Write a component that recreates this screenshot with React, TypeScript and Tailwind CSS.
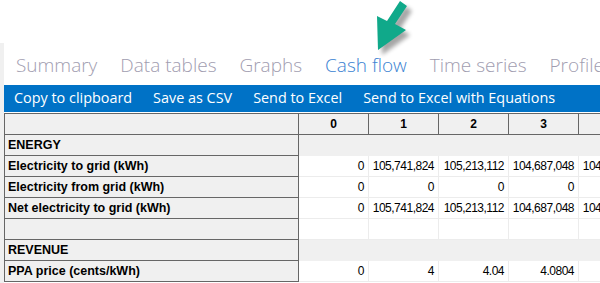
import React from "react";

const tabs = ["Summary", "Data tables", "Graphs", "Cash flow", "Time series", "Profile"];
const actions = ["Copy to clipboard", "Save as CSV", "Send to Excel", "Send to Excel with Equations"];

type Row = { label: string; section?: boolean; blank?: boolean; values?: string[] };

const rows: Row[] = [
  { label: "ENERGY", section: true },
  { label: "Electricity to grid (kWh)", values: ["0", "105,741,824", "105,213,112", "104,687,048", "104,163,613"] },
  { label: "Electricity from grid (kWh)", values: ["0", "0", "0", "0", "0"] },
  { label: "Net electricity to grid (kWh)", values: ["0", "105,741,824", "105,213,112", "104,687,048", "104,163,613"] },
  { label: "", blank: true },
  { label: "REVENUE", section: true },
  { label: "PPA price (cents/kWh)", values: ["0", "4", "4.04", "4.0804", "4.1212"] },
];

const Arrow = () => (
  <svg className="absolute left-[366px] top-0" width="52" height="58" viewBox="0 0 52 58">
    <defs>
      <filter id="sh" x="-30%" y="-30%" width="160%" height="160%">
        <feGaussianBlur stdDeviation="2" />
      </filter>
    </defs>
    <path d="M36 3 L43 8 L31 26 L41 32 L13 52 L12 18 L22 23 Z" fill="#000" opacity="0.35" filter="url(#sh)" transform="translate(3 3)" />
    <path d="M34 1 L41 6 L29 24 L40 30 L12 50 L11 16 L21 21 Z" fill="#10a98a" />
  </svg>
);

export default function App() {
  return (
    <div className="relative w-[600px] h-[283px] overflow-hidden bg-white font-['Open_Sans','Noto_Sans',sans-serif]">
      <Arrow />
      <div className="h-[43px]" />
      <div className="flex h-[240px]">
        <div className="w-[4px] shrink-0 bg-[#f0f0f0]" />
        <div className="flex-1 min-w-0 flex flex-col">
          <div className="h-[42px] flex items-end gap-[23px] pl-[12px] pb-[10px] whitespace-nowrap">
            {tabs.map((t) => (
              <span
                key={t}
                className={
                  "text-[19px] font-light leading-none " +
                  (t === "Cash flow" ? "text-[#3a82d2]" : "text-[#a19db0]")
                }
              >
                {t}
              </span>
            ))}
          </div>
          <div className="h-[27px] bg-[#0072c6] flex items-center gap-[21px] pl-[10px] whitespace-nowrap">
            {actions.map((a) => (
              <span key={a} className="text-white text-[14.4px] leading-none">
                {a}
              </span>
            ))}
          </div>
          <div className="pt-[1px] overflow-hidden">
            <table className="w-[644px] border-collapse table-fixed text-[12px] font-['Liberation_Sans',sans-serif] text-black">
              <colgroup>
                <col className="w-[294px]" />
                <col className="w-[70px]" />
                <col className="w-[70px]" />
                <col className="w-[70px]" />
                <col className="w-[70px]" />
                <col className="w-[70px]" />
              </colgroup>
              <thead>
                <tr className="h-[21px]">
                  <th className="bg-[#f0f0f0] border border-[#666666]" />
                  {["0", "1", "2", "3", "4"].map((h) => (
                    <th key={h} className="bg-[#f0f0f0] border border-[#666666] text-center font-bold">
                      {h}
                    </th>
                  ))}
                </tr>
              </thead>
              <tbody>
                {rows.map((r, i) => (
                  <tr key={i} className="h-[21px]">
                    <td className="bg-[#f0f0f0] border border-[#666666] pl-[3px] font-bold text-[12.5px] whitespace-nowrap">
                      {r.label}
                    </td>
                    {r.section ? (
                      <td colSpan={5} className="bg-[#f0f0f0] border-y border-[#f0f0f0]" />
                    ) : (
                      [0, 1, 2, 3, 4].map((c) => (
                        <td
                          key={c}
                          className="bg-white border border-[#ececec] text-right pr-[4px] whitespace-nowrap overflow-hidden tracking-[-0.5px]"
                        >
                          {r.values ? r.values[c] : ""}
                        </td>
                      ))
                    )}
                  </tr>
                ))}
              </tbody>
            </table>
          </div>
        </div>
      </div>
    </div>
  );
}
